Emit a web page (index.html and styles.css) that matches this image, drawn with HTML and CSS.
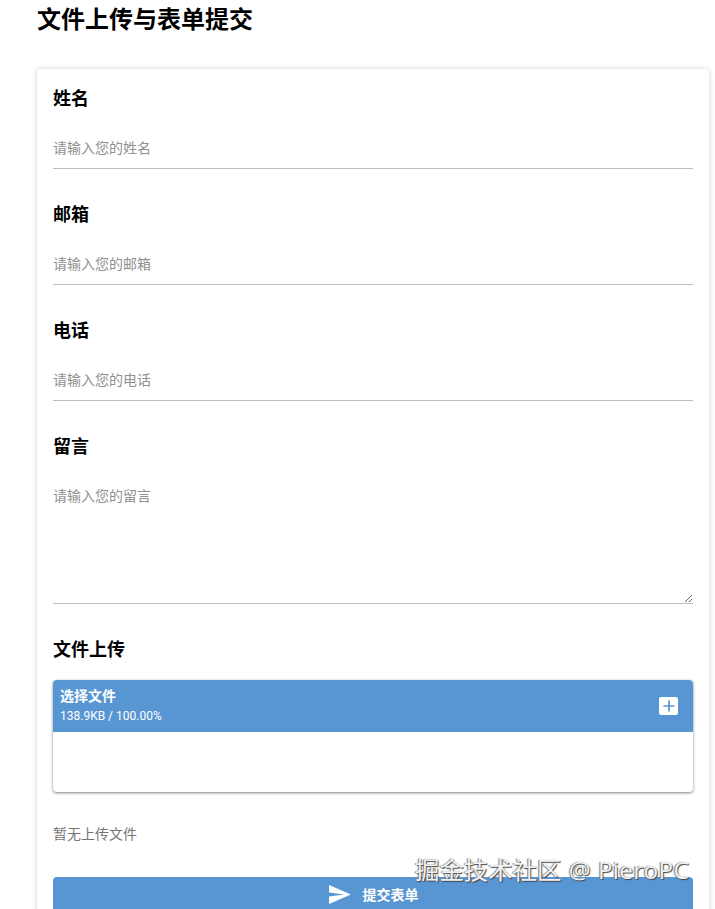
FILE: index.html
```html
<!DOCTYPE html>
<html lang="zh-CN">
<head>
    <meta charset="UTF-8">
    <meta name="viewport" content="width=device-width, initial-scale=1.0">
    <title>文件上传与表单提交</title>
    <link rel="stylesheet" href="styles.css">
</head>
<body>
    <div class="page">
        <h1 class="title">文件上传与表单提交</h1>

        <form class="card">
            <div class="field">
                <label for="name">姓名</label>
                <input type="text" id="name" placeholder="请输入您的姓名">
            </div>
            <div class="field">
                <label for="email">邮箱</label>
                <input type="text" id="email" placeholder="请输入您的邮箱">
            </div>
            <div class="field">
                <label for="phone">电话</label>
                <input type="text" id="phone" placeholder="请输入您的电话">
            </div>
            <div class="field">
                <label for="message">留言</label>
                <textarea id="message" placeholder="请输入您的留言"></textarea>
            </div>

            <div class="upload-field">
                <div class="upload-label">文件上传</div>
                <div class="uploader">
                    <div class="uploader-head">
                        <div class="uploader-info">
                            <div class="uploader-title">选择文件</div>
                            <div class="uploader-stat">138.9KB / 100.00%</div>
                        </div>
                        <span class="add-btn">
                            <svg width="12" height="12" viewBox="0 0 12 12"><path d="M6 0.5v11M0.5 6h11" stroke="#5896d3" stroke-width="1.7" fill="none"/></svg>
                        </span>
                    </div>
                    <div class="uploader-body"></div>
                </div>
                <p class="empty-note">暂无上传文件</p>
            </div>

            <button type="button" class="submit-btn">
                <svg width="23" height="19" viewBox="0 0 24 20"><path d="M1 20l23-10L1 0v7.8L17 10 1 12.2z" fill="#fff"/></svg>
                <span>提交表单</span>
            </button>
        </form>
    </div>

    <div class="watermark">掘金技术社区 @ <span class="watermark-name">PieroPC</span></div>
</body>
</html>
```

FILE: styles.css
```css
html, body {
    margin: 0;
    height: 909px;
    overflow: hidden;
    background-color: #fff;
}
body {
    font-family: Roboto, "Noto Sans CJK SC", sans-serif;
    color: #000;
}
.page {
    padding: 0 6px 0 37px;
}
.title {
    margin: 0;
    padding-top: 4px;
    height: 65px;
    font-size: 24px;
    line-height: 32px;
    font-weight: 700;
}
.card {
    padding: 17px 16px 16px;
    border-radius: 4px;
    background-color: #fff;
    box-shadow: 0 0 5px rgba(0, 0, 0, 0.2);
}
.field {
    margin-bottom: 33px;
}
.field label,
.upload-label {
    display: block;
    height: 26px;
    font-size: 18px;
    line-height: 26px;
    font-weight: 700;
}
.field input,
.field textarea {
    display: block;
    box-sizing: border-box;
    width: 100%;
    margin: 0;
    padding: 0;
    border: none;
    border-bottom: 1px solid #bdbdbd;
    border-radius: 0;
    outline: none;
    font-family: inherit;
    font-size: 14px;
    color: #000;
    background: transparent;
}
.field input {
    height: 57px;
    padding-top: 15px;
}
.field textarea {
    height: 144px;
    padding-top: 26px;
    line-height: 20px;
    resize: vertical;
}
input::placeholder,
textarea::placeholder {
    color: #909090;
    opacity: 1;
}
.upload-label {
    margin-bottom: 17px;
}
.uploader {
    border-radius: 4px;
    overflow: hidden;
    background-color: #fff;
    box-shadow: 0 1px 3px rgba(0, 0, 0, 0.5);
}
.uploader-head {
    display: flex;
    align-items: center;
    justify-content: space-between;
    height: 52px;
    padding: 0 15px 0 7px;
    background-color: #5896d3;
    color: #fff;
}
.uploader-title {
    font-size: 14px;
    line-height: 19px;
    font-weight: 700;
}
.uploader-stat {
    font-size: 12px;
    line-height: 20px;
}
.add-btn {
    display: flex;
    align-items: center;
    justify-content: center;
    width: 19px;
    height: 18px;
    border-radius: 2px;
    background-color: #fff;
}
.uploader-body {
    height: 60px;
}
.empty-note {
    margin: 32px 0 33px;
    font-size: 14px;
    line-height: 20px;
    color: #757575;
}
.submit-btn {
    display: flex;
    align-items: center;
    justify-content: center;
    gap: 12px;
    width: 100%;
    height: 36px;
    padding: 0 0 2px;
    border: none;
    border-radius: 4px;
    background-color: #5896d3;
    color: #fff;
    font-family: inherit;
    font-size: 14px;
    font-weight: 700;
}
.watermark {
    position: absolute;
    left: 415px;
    top: 854px;
    font-family: "Open Sans", "Noto Sans CJK SC", sans-serif;
    font-size: 24.4px;
    line-height: 32px;
    word-spacing: 1px;
    color: #f2f2f2;
    white-space: nowrap;
    text-shadow: 1px 1px 1px #444, -1px 0 1px #777;
}
.watermark-name {
    letter-spacing: 0.3px;
}
```
